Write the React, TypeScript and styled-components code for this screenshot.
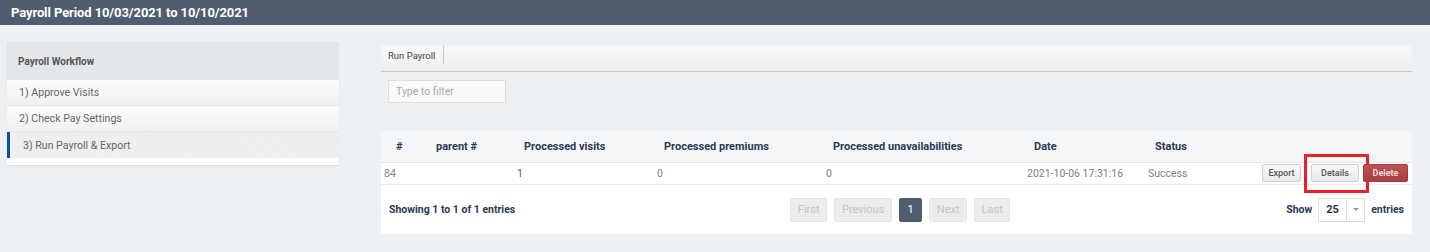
import React from "react";
import styled, { createGlobalStyle } from "styled-components";

const GlobalStyle = createGlobalStyle`
  html, body {
    margin: 0;
    padding: 0;
    background: #eef1f4;
    font-family: Roboto, "Liberation Sans", Arial, sans-serif;
  }
  * { box-sizing: border-box; }
`;

const TopBar = styled.div`
  height: 25px;
  background: #4f5d6e;
  color: #fff;
  font-weight: 700;
  font-size: 13px;
  line-height: 25px;
  padding-left: 11px;
  letter-spacing: -0.1px;
`;

const Layout = styled.div`
  display: flex;
  align-items: flex-start;
  padding: 17px 18px 0 7px;
  gap: 42px;
`;

const Sidebar = styled.div`
  width: 332px;
  flex: none;
  background: #fff;
  box-shadow: 0 1px 1px rgba(0, 0, 0, 0.08);
  padding-bottom: 7px;
`;

const SideHeader = styled.div`
  height: 38px;
  background: #e4e7ea;
  color: #555;
  font-size: 10px;
  font-weight: 700;
  padding-left: 11px;
  display: flex;
  align-items: center;
`;

const SideItem = styled.div<{ $active?: boolean }>`
  height: 26px;
  display: flex;
  align-items: center;
  font-size: 10.6px;
  color: #666;
  padding-left: ${(p) => (p.$active ? "13px" : "12px")};
  border-left: ${(p) => (p.$active ? "3px solid #0d4ea6" : "none")};
  border-bottom: 1px solid #e6e6e6;
  background: ${(p) =>
    p.$active
      ? "repeating-linear-gradient(45deg, #ececec 0 1px, #f0f0f0 1px 3px)"
      : "linear-gradient(#fbfbfb, #f1f1f1)"};
  &:last-child {
    border-bottom: none;
  }
`;

const Main = styled.div`
  flex: 1;
  display: flex;
  flex-direction: column;
`;

const TabBar = styled.div`
  margin-top: 4px;
  height: 26px;
  background: linear-gradient(#f8f8f8, #eeeeee);
  border-bottom: 1px solid #c9c9c9;
  display: flex;
`;

const Tab = styled.div`
  font-size: 9.5px;
  color: #444;
  padding: 0 8px 0 7px;
  height: 18px;
  display: flex;
  align-items: center;
  border-right: 1px solid #c6c6c6;
`;

const FilterInput = styled.input`
  margin: 8px 0 0 7px;
  width: 118px;
  height: 23px;
  border: 1px solid #dedede;
  background: #f9f9f9;
  font-family: inherit;
  font-size: 10.5px;
  padding: 0 7px;
  outline: none;
  &::placeholder {
    color: #aaa;
  }
`;

const Card = styled.div`
  margin-top: 28px;
  background: #fff;
  height: 103px;
`;

const Table = styled.table`
  width: 100%;
  border-collapse: collapse;
  table-layout: fixed;
`;

const Th = styled.th<{ $pl?: number }>`
  height: 31px;
  background: #f4f6f8;
  text-align: left;
  font-size: 11px;
  font-weight: 700;
  color: #2b3a55;
  padding: 0 0 0 ${(p) => p.$pl ?? 10}px;
  border-bottom: 1px solid #e3e6ea;
`;

const Td = styled.td<{ $link?: boolean }>`
  height: 22px;
  font-size: 10.5px;
  color: ${(p) => (p.$link ? "#2a6ab8" : "#808080")};
  padding: 0 0 0 3px;
  border-bottom: 1px solid #ebebeb;
`;

const Actions = styled.div`
  display: flex;
  justify-content: flex-end;
  align-items: center;
  padding-right: 4px;
`;

const RowButton = styled.button<{ $danger?: boolean; $gap?: number; $w: number }>`
  position: relative;
  width: ${(p) => p.$w}px;
  height: 18px;
  margin-left: ${(p) => p.$gap ?? 0}px;
  padding: 0;
  font-family: inherit;
  font-size: 9px;
  font-weight: ${(p) => (p.$danger ? 700 : 500)};
  color: ${(p) => (p.$danger ? "#f3d6d6" : "#555")};
  background: ${(p) =>
    p.$danger
      ? "linear-gradient(#bb5555, #a53e3e)"
      : "linear-gradient(#f9f9f9, #e9e9e9)"};
  border: 1px solid ${(p) => (p.$danger ? "#a33a3a" : "#cfcfcf")};
  border-radius: 2px;
  cursor: pointer;
`;

const Highlight = styled.span`
  position: absolute;
  left: -8px;
  top: -11px;
  width: 65px;
  height: 39px;
  border: 3px solid #e8202a;
  pointer-events: none;
`;

const Footer = styled.div`
  display: flex;
  align-items: center;
  padding: 13px 8px 0 8px;
`;

const Info = styled.div`
  flex: 1;
  font-size: 10.5px;
  font-weight: 700;
  color: #2b3a55;
`;

const Pager = styled.div`
  display: flex;
  gap: 7px;
  margin-right: 276px;
`;

const PageBtn = styled.div<{ $current?: boolean; $w: number }>`
  width: ${(p) => p.$w}px;
  height: 24px;
  border-radius: 2px;
  display: flex;
  align-items: center;
  justify-content: center;
  font-size: 11px;
  color: ${(p) => (p.$current ? "#fff" : "#c4c4c4")};
  background: ${(p) => (p.$current ? "#4f5d6e" : "#ececec")};
  border: 1px solid ${(p) => (p.$current ? "#4f5d6e" : "#e4e4e4")};
`;

const ShowBox = styled.div`
  display: flex;
  align-items: center;
  gap: 6px;
  font-size: 10.5px;
  font-weight: 700;
  color: #2b3a55;
`;

const Select = styled.div`
  display: flex;
  width: 47px;
  height: 24px;
  border: 1px solid #ddd;
  background: #fff;
  font-size: 11px;
  font-weight: 700;
  color: #333;
`;

const SelectValue = styled.div`
  flex: 1;
  display: flex;
  align-items: center;
  padding-left: 7px;
`;

const Caret = styled.div`
  width: 18px;
  border-left: 1px solid #ddd;
  display: flex;
  align-items: center;
  justify-content: center;
  &::after {
    content: "";
    border-left: 3px solid transparent;
    border-right: 3px solid transparent;
    border-top: 3px solid #999;
  }
`;

export default function App() {
  return (
    <>
      <GlobalStyle />
      <TopBar>Payroll Period 10/03/2021 to 10/10/2021</TopBar>
      <Layout>
        <Sidebar>
          <SideHeader>Payroll Workflow</SideHeader>
          <SideItem>1) Approve Visits</SideItem>
          <SideItem>2) Check Pay Settings</SideItem>
          <SideItem $active>3) Run Payroll &amp; Export</SideItem>
        </Sidebar>
        <Main>
          <TabBar>
            <Tab>Run Payroll</Tab>
          </TabBar>
          <FilterInput placeholder="Type to filter" />
          <Card>
            <Table>
              <colgroup>
                <col style={{ width: 45 }} />
                <col style={{ width: 88 }} />
                <col style={{ width: 140 }} />
                <col style={{ width: 169 }} />
                <col style={{ width: 201 }} />
                <col style={{ width: 121 }} />
                <col style={{ width: 68 }} />
                <col />
              </colgroup>
              <thead>
                <tr>
                  <Th $pl={15}>#</Th>
                  <Th>parent #</Th>
                  <Th>Processed visits</Th>
                  <Th>Processed premiums</Th>
                  <Th>Processed unavailabilities</Th>
                  <Th>Date</Th>
                  <Th>Status</Th>
                  <Th />
                </tr>
              </thead>
              <tbody>
                <tr>
                  <Td>84</Td>
                  <Td />
                  <Td $link>1</Td>
                  <Td>0</Td>
                  <Td>0</Td>
                  <Td>2021-10-06 17:31:16</Td>
                  <Td>Success</Td>
                  <Td>
                    <Actions>
                      <RowButton $w={39}>Export</RowButton>
                      <RowButton $w={48} $gap={10}>
                        Details
                        <Highlight />
                      </RowButton>
                      <RowButton $w={45} $danger $gap={4}>
                        Delete
                      </RowButton>
                    </Actions>
                  </Td>
                </tr>
              </tbody>
            </Table>
            <Footer>
              <Info>Showing 1 to 1 of 1 entries</Info>
              <Pager>
                <PageBtn $w={37}>First</PageBtn>
                <PageBtn $w={58}>Previous</PageBtn>
                <PageBtn $w={23} $current>
                  1
                </PageBtn>
                <PageBtn $w={38}>Next</PageBtn>
                <PageBtn $w={36}>Last</PageBtn>
              </Pager>
              <ShowBox>
                Show
                <Select>
                  <SelectValue>25</SelectValue>
                  <Caret />
                </Select>
                entries
              </ShowBox>
            </Footer>
          </Card>
        </Main>
      </Layout>
    </>
  );
}
